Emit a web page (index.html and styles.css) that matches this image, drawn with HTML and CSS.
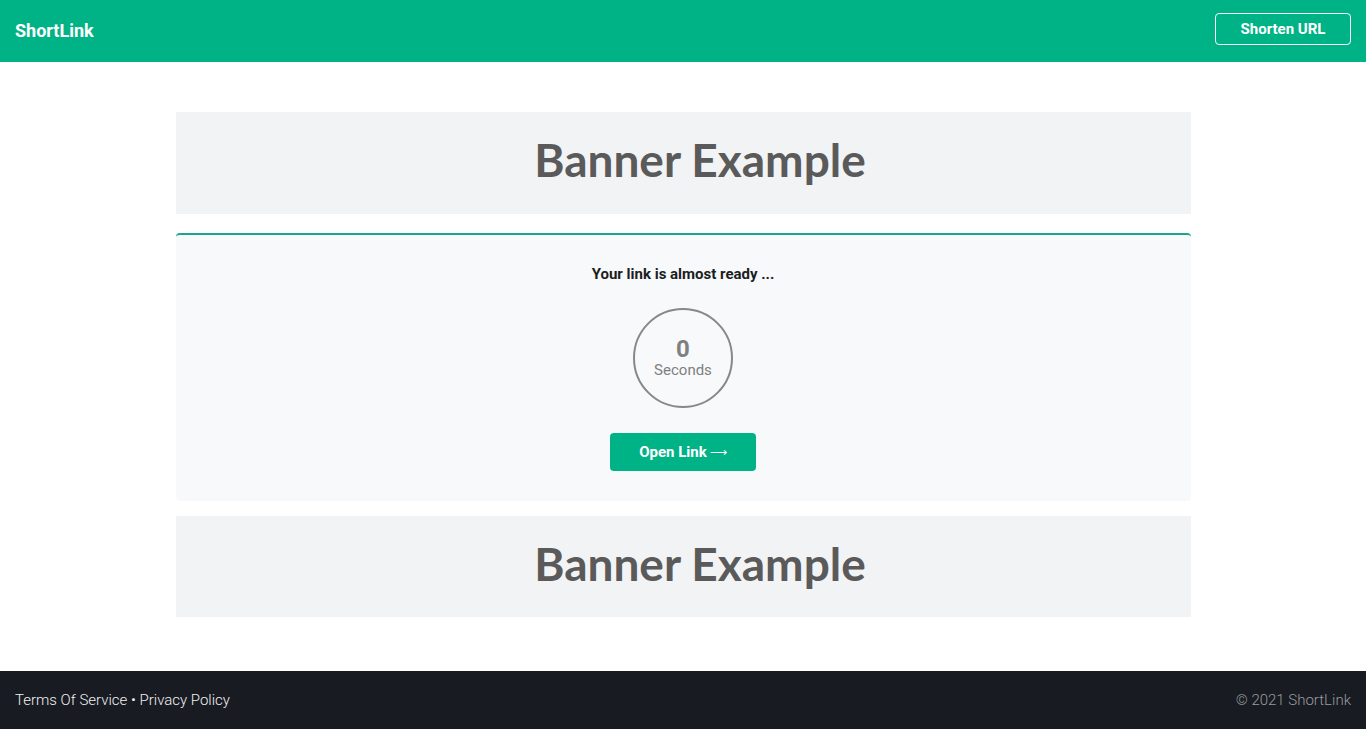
FILE: index.html
```html
<!DOCTYPE html>
<html lang="en">
<head>
    <meta charset="UTF-8" />
    <meta name="viewport" content="width=device-width, initial-scale=1.0">
    <title>ShortLink</title>
    <link rel="stylesheet" href="styles.css">
</head>
<body>
    <header class="navbar">
        <a class="brand" href="#">ShortLink</a>
        <a class="nav-button" href="#">Shorten URL</a>
    </header>

    <main class="content">
        <div class="banner"><span>Banner Example</span></div>

        <div class="card">
            <p class="card-title">Your link is almost ready ...</p>
            <div class="timer">
                <span class="timer-count" id="count">0</span>
                <span class="timer-label">Seconds</span>
            </div>
            <a class="open-link" href="#">Open Link <span class="arrow">&#x27F6;</span></a>
        </div>

        <div class="banner banner-bottom"><span>Banner Example</span></div>
    </main>

    <footer class="footer">
        <div class="footer-links">
            <a href="#">Terms Of Service</a> &bull; <a href="#">Privacy Policy</a>
        </div>
        <div class="copyright">&copy; 2021 ShortLink</div>
    </footer>
</body>
</html>
```

FILE: styles.css
```css
* {
    margin: 0;
    padding: 0;
    box-sizing: border-box;
}

body {
    min-height: 100vh;
    display: flex;
    flex-direction: column;
    background-color: #fff;
    font-family: Roboto, "Liberation Sans", sans-serif;
    color: #1f2328;
}

a {
    color: inherit;
    text-decoration: none;
}

.navbar {
    height: 62px;
    background-color: #00b386;
    display: flex;
    justify-content: space-between;
    align-items: center;
    padding: 0 15px;
}

.brand {
    color: #fff;
    font-weight: 700;
    font-size: 18px;
    margin-top: -1px;
}

.nav-button {
    width: 136px;
    height: 32px;
    margin-top: -4px;
    border: 1px solid #fff;
    border-radius: 4px;
    color: #fff;
    font-weight: 700;
    font-size: 15px;
    display: flex;
    align-items: center;
    justify-content: center;
}

.content {
    width: 1015px;
    margin: 50px auto 54px;
    display: flex;
    flex-direction: column;
}

.banner {
    height: 102px;
    background-color: #f2f3f5;
    display: flex;
    align-items: center;
    justify-content: center;
    padding: 0 0 7px 34px;
}

.banner span {
    font-family: Lato, "Open Sans", sans-serif;
    font-weight: 700;
    font-size: 46px;
    color: #5a5a5a;
}

.banner-bottom {
    height: 101px;
}

.card {
    margin: 19px 0 15px;
    background-color: #f8f9fb;
    border-top: 2px solid #1aa58c;
    border-radius: 4px;
    padding: 30px 0 30px;
    display: flex;
    flex-direction: column;
    align-items: center;
}

.card-title {
    font-weight: 700;
    font-size: 15px;
    color: #1b1d21;
    line-height: 18px;
}

.timer {
    width: 100px;
    height: 100px;
    margin-top: 25px;
    border: 2px solid #888;
    border-radius: 50%;
    display: flex;
    flex-direction: column;
    align-items: center;
    justify-content: center;
    color: #808080;
}

.timer-count {
    font-size: 24px;
    font-weight: 700;
    line-height: 24px;
}

.timer-label {
    font-size: 15px;
    line-height: 18px;
}

.open-link {
    margin-top: 25px;
    width: 146px;
    height: 38px;
    background-color: #00b386;
    border-radius: 4px;
    color: #fff;
    font-weight: 700;
    font-size: 15px;
    display: flex;
    align-items: center;
    justify-content: center;
    gap: 3px;
}

.arrow {
    font-family: "DejaVu Sans", sans-serif;
    font-weight: 400;
    font-size: 12px;
}

.footer {
    margin-top: auto;
    height: 58px;
    background-color: #181b22;
    display: flex;
    justify-content: space-between;
    align-items: center;
    padding: 0 15px;
    font-size: 15px;
    font-weight: 300;
}

.footer-links {
    color: #f0f0f0;
}

.copyright {
    color: #9a9ca0;
}
```
